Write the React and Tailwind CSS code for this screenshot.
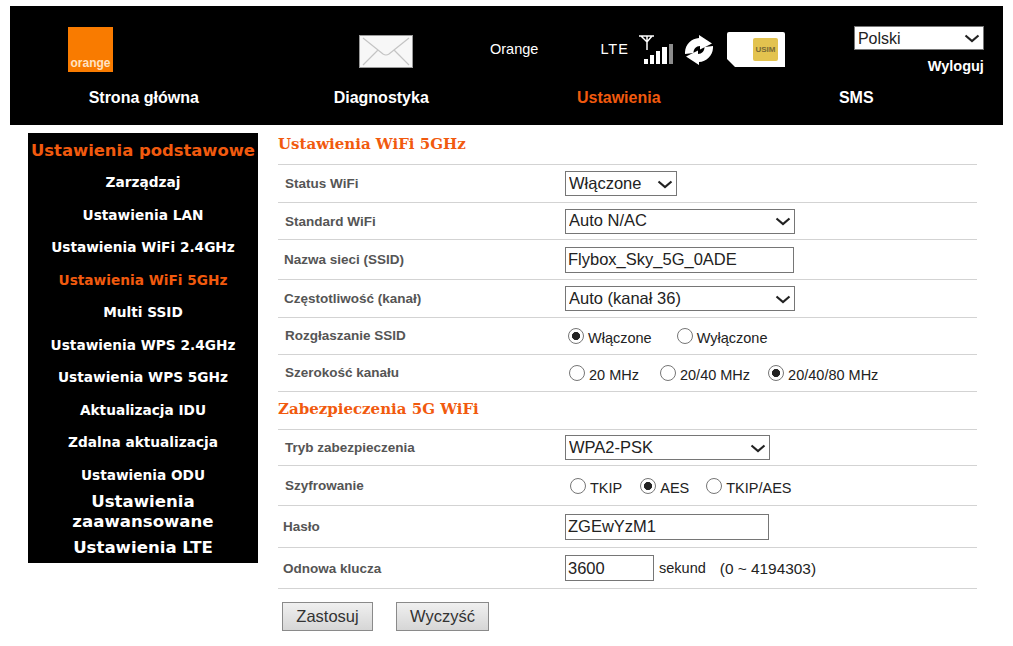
import React from 'react';

const sans = { fontFamily: '"Liberation Sans", Arial, sans-serif' };

const sideItems = [
  'Zarządzaj',
  'Ustawienia LAN',
  'Ustawienia WiFi 2.4GHz',
  'Ustawienia WiFi 5GHz',
  'Multi SSID',
  'Ustawienia WPS 2.4GHz',
  'Ustawienia WPS 5GHz',
  'Aktualizacja IDU',
  'Zdalna aktualizacja',
  'Ustawienia ODU',
];

function Envelope() {
  return (
    <svg width="54" height="33" viewBox="0 0 54 33" className="block">
      <rect x="0.5" y="0.5" width="53" height="32" fill="#f7f7f7" stroke="#9a9a9a" />
      <path d="M4 3 L24 19 Q27 21 30 19 L50 3 M4 30 L19 15 M50 30 L35 15" fill="none" stroke="#c4c4c4" strokeWidth="1.2" />
    </svg>
  );
}

function Signal() {
  return (
    <svg width="36" height="32" viewBox="0 0 36 32" className="block">
      <path d="M0 2 H15 M2 2 L8 8 L13 2 M8 2 V16" fill="none" stroke="#fff" strokeWidth="1.5" />
      <rect x="5" y="25" width="4" height="5" fill="#fff" />
      <rect x="11" y="21" width="4" height="9" fill="#fff" />
      <rect x="17" y="17" width="4" height="13" fill="#fff" />
      <rect x="23" y="13" width="5" height="17" fill="#fff" />
      <rect x="30" y="10" width="4" height="20" fill="#8c8c8c" />
    </svg>
  );
}

function Refresh() {
  const half = 'M0 19 C-0.5 10 6 3.5 14 3 L14 0 L27 8.5 L15 14.5 L15 11 C11 11 8.5 14 8.5 18 Z';
  return (
    <svg width="28" height="30" viewBox="0 0 28 30" className="block">
      <path d={half} fill="#fff" />
      <path d={half} fill="#fff" transform="rotate(180 14 15)" />
    </svg>
  );
}

function Sim() {
  return (
    <svg width="58" height="35" viewBox="0 0 58 35" className="block">
      <path d="M2 0 H56 Q58 0 58 2 V35 H8 L0 27 V2 Q0 0 2 0 Z" fill="#fff" />
      <rect x="26" y="6" width="25" height="23" rx="2" fill="#e3c34f" />
      <text x="38.5" y="20" textAnchor="middle" fontSize="8" fontWeight="700" fill="#7a6a35" fontFamily="Liberation Sans, sans-serif">USIM</text>
    </svg>
  );
}

function Chevron() {
  return (
    <svg width="16" height="9" viewBox="0 0 16 9" className="pointer-events-none absolute right-[4px] top-1/2 -mt-[4px]">
      <path d="M1.5 1.5 L8 7 L14.5 1.5" fill="none" stroke="#222" strokeWidth="2.2" />
    </svg>
  );
}

function Row({ label, height, indent = 'pl-[7px]', nudge = 'mt-[1px]', children }) {
  return (
    <div className={`flex items-center border-b border-[#d3d3d3] ${height}`}>
      <div className={`w-[287px] shrink-0 text-[13.5px] font-bold text-[#555] ${indent} ${nudge}`}>{label}</div>
      <div className="flex items-center text-[14.5px] text-[#222]">{children}</div>
    </div>
  );
}

function Select({ value, options, width, height = 'h-[25px]' }) {
  return (
    <div className={`relative ${width}`}>
      <select
        defaultValue={value}
        className={`block w-full appearance-none border border-[#767676] bg-white pb-[2px] pl-[3px] text-[16.5px] leading-[18px] text-[#222] ${height}`}
      >
        {(options || [value]).map((o) => (
          <option key={o}>{o}</option>
        ))}
      </select>
      <Chevron />
    </div>
  );
}

function TextBox({ value, width }) {
  return (
    <input
      defaultValue={value}
      className={`h-[26px] border border-[#767676] bg-white pl-[2px] text-[16.5px] text-[#222] outline-none ${width}`}
    />
  );
}

function Radio({ name, label, checked, gap = 'mr-[22px]', offset = 'ml-[3px]' }) {
  return (
    <label className={`flex items-center ${gap}`}>
      <input
        type="radio"
        name={name}
        defaultChecked={checked}
        className={`mr-[4px] h-[16px] w-[16px] appearance-none rounded-full border border-[#767676] bg-white checked:bg-[radial-gradient(circle,#222_0,#222_38%,#fff_44%)] ${offset}`}
      />
      <span className="mt-[6px]">{label}</span>
    </label>
  );
}

function Heading({ children, className }) {
  return (
    <div
      className={`flex items-center border-b border-[#d3d3d3] text-[15px] font-bold text-[#f15a0e] ${className}`}
      style={{ fontFamily: '"DejaVu Serif", Georgia, serif' }}
    >
      {children}
    </div>
  );
}

export default function App() {
  return (
    <div className="min-h-[646px] bg-white pt-[6px]" style={sans}>
      {/* top bar */}
      <div className="ml-[10px] h-[119px] w-[993px] bg-black text-white">
        <div className="flex h-[80px] items-start">
          <div className="ml-[58px] mt-[21px] flex h-[45px] w-[45px] items-end justify-center bg-[#f97b00] pb-[3px] text-[12px] font-bold leading-none text-[#ffe3c4]">
            orange
          </div>
          <div className="ml-[246px] mt-[29px]">
            <Envelope />
          </div>
          <div className="ml-[77px] mt-[33px] text-[14.5px]">Orange</div>
          <div className="ml-[62px] mt-[33px] text-[14.5px] tracking-[1px]">LTE</div>
          <div className="ml-[10px] mt-[28px]">
            <Signal />
          </div>
          <div className="ml-[10px] mt-[29px]">
            <Refresh />
          </div>
          <div className="ml-[14px] mt-[26px]">
            <Sim />
          </div>
          <div className="ml-[69px] mt-[20px] flex flex-col items-end">
            <div className="relative w-[130px]">
              <select defaultValue="Polski" className="block h-[24px] w-full appearance-none border border-[#767676] bg-white pl-[3px] text-[16px] text-[#222]">
                <option>Polski</option>
                <option>English</option>
              </select>
              <Chevron />
            </div>
            <div className="mt-[6px] text-[14.5px] font-bold">Wyloguj</div>
          </div>
        </div>
        <div className="ml-[15px] grid w-[950px] grid-cols-4 text-center text-[16px] font-bold">
          <div>Strona główna</div>
          <div>Diagnostyka</div>
          <div className="text-[#f15a0e]">Ustawienia</div>
          <div>SMS</div>
        </div>
      </div>

      <div className="flex items-start pl-[28px] pt-[8px]">
        {/* side menu */}
        <div
          className="h-[430px] w-[230px] shrink-0 bg-black text-center font-bold text-white"
          style={{ fontFamily: '"DejaVu Sans", Verdana, sans-serif' }}
        >
          <div className="flex h-[33px] items-center justify-center whitespace-nowrap pt-[3px] text-[16.4px] text-[#f15a0e]">Ustawienia podstawowe</div>
          {sideItems.map((item) => (
            <div
              key={item}
              className={`flex h-[32.5px] items-center justify-center pt-[1px] text-[13.7px] ${item === 'Ustawienia WiFi 5GHz' ? 'text-[#f15a0e]' : ''}`}
            >
              {item}
            </div>
          ))}
          <div className="pt-[1px] text-[16.6px] leading-[20px]">Ustawienia zaawansowane</div>
          <div className="mt-[6px] text-[16.6px] leading-[20px]">Ustawienia LTE</div>
        </div>

        {/* form */}
        <div className="ml-[20px] w-[699px]">
          <Heading className="h-[32px] pb-[8px]">Ustawienia WiFi 5GHz</Heading>
          <Row label="Status WiFi" height="h-[38px]">
            <Select value="Włączone" options={['Włączone', 'Wyłączone']} width="w-[112px]" />
          </Row>
          <Row label="Standard WiFi" height="h-[37px]" nudge="mt-[2px]">
            <Select value="Auto N/AC" width="w-[230px]" />
          </Row>
          <Row label="Nazwa sieci (SSID)" height="h-[40px]" indent="pl-[6px]">
            <TextBox value="Flybox_Sky_5G_0ADE" width="w-[229px]" />
          </Row>
          <Row label="Częstotliwość (kanał)" height="h-[38px]" indent="pl-[6px]">
            <Select value="Auto (kanał 36)" width="w-[230px]" />
          </Row>
          <Row label="Rozgłaszanie SSID" height="h-[37px]" nudge="mt-0">
            <Radio name="ssid" label="Włączone" checked />
            <Radio name="ssid" label="Wyłączone" />
          </Row>
          <Row label="Szerokość kanału" height="h-[37px]" nudge="mt-0">
            <Radio name="bw" label="20 MHz" gap="mr-[18px]" offset="ml-[4px]" />
            <Radio name="bw" label="20/40 MHz" gap="mr-[15px]" />
            <Radio name="bw" label="20/40/80 MHz" checked />
          </Row>
          <Heading className="h-[38px] pb-[2px]">Zabezpieczenia 5G WiFi</Heading>
          <Row label="Tryb zabezpieczenia" height="h-[36px]" nudge="mt-[2px]">
            <Select value="WPA2-PSK" width="w-[205px]" />
          </Row>
          <Row label="Szyfrowanie" height="h-[40px]">
            <Radio name="enc" label="TKIP" gap="mr-[15px]" offset="ml-[5px]" />
            <Radio name="enc" label="AES" gap="mr-[14px]" checked />
            <Radio name="enc" label="TKIP/AES" />
          </Row>
          <Row label="Hasło" height="h-[42px]" indent="pl-[5px]">
            <TextBox value="ZGEwYzM1" width="w-[204px]" />
          </Row>
          <Row label="Odnowa klucza" height="h-[41px]" indent="pl-[5px]" nudge="mt-[2px]">
            <TextBox value="3600" width="w-[89px]" />
            <span className="ml-[5px] mt-[1px]">sekund</span>
            <span className="ml-[14px] mt-[1px] text-[15.4px]">(0 ~ 4194303)</span>
          </Row>
          <div className="flex pl-[4px] pt-[13px]">
            <button className="h-[29px] w-[91px] border border-[#8a8a8a] bg-gradient-to-b from-[#f0f0f0] to-[#d6d6d6] text-[16.5px] text-[#333]">Zastosuj</button>
            <button className="ml-[23px] h-[29px] w-[93px] border border-[#8a8a8a] bg-gradient-to-b from-[#f0f0f0] to-[#d6d6d6] text-[16.5px] text-[#333]">Wyczyść</button>
          </div>
        </div>
      </div>
    </div>
  );
}
